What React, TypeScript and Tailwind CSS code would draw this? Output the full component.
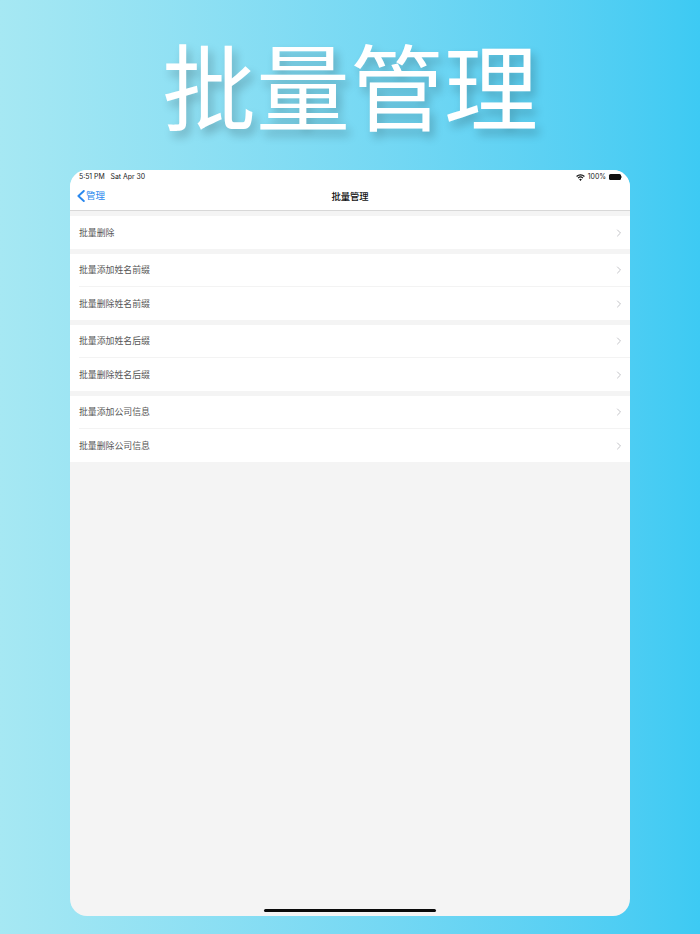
import { ChevronRight } from 'lucide-react';

const font = "font-['Inter','Noto_Sans_CJK_SC',sans-serif]";

const groups = [
  ['批量删除'],
  ['批量添加姓名前缀', '批量删除姓名前缀'],
  ['批量添加姓名后缀', '批量删除姓名后缀'],
  ['批量添加公司信息', '批量删除公司信息'],
];

const Row = ({ label, last }: { label: string; last: boolean }) => (
  <div className="h-[33px] pl-[9px] bg-white">
    <div className={`h-full flex items-center justify-between pr-[5px] ${last ? '' : 'border-b border-[#f3f3f3]'}`}>
      <span className="pt-[1px] text-[8.9px] leading-none text-[#555555]">{label}</span>
      <ChevronRight className="w-[12px] h-[12px] text-[#c4c4c8]" strokeWidth={2} />
    </div>
  </div>
);

export default function App() {
  return (
    <div className={`${font} w-[700px] h-[934px] overflow-hidden flex flex-col items-center bg-gradient-to-r from-[#a6e8f3] to-[#3dcaf3]`}>
      <h1 className="h-[170px] pt-[36px] text-[94px] leading-[108px] font-normal text-white [text-shadow:4px_6px_10px_rgba(0,0,0,0.22)]">
        批量管理
      </h1>
      <div className="w-[560px] h-[746px] rounded-[17px] overflow-hidden bg-[#f4f4f4] flex flex-col relative">
        <div className="h-[41px] bg-white border-b border-[#d8d8d8] flex flex-col">
          <div className="h-[13px] pt-[1px] pl-[9px] pr-[8px] flex items-center justify-between text-[6.9px] leading-none text-[#222222]">
            <span>5:51 PM&nbsp;&nbsp; Sat Apr 30</span>
            <div className="flex items-center gap-[3px]">
              <svg viewBox="0 0 16 12" className="w-[9px] h-[7px]" fill="#111111">
                <path d="M8 12 5.6 9.2a3.4 3.4 0 0 1 4.8 0zM4.4 7.9 3 6.3a7.2 7.2 0 0 1 10 0l-1.4 1.6a5.2 5.2 0 0 0-7.2 0zM1.8 5 .3 3.3a11.2 11.2 0 0 1 15.4 0L14.2 5a9 9 0 0 0-12.4 0z" />
              </svg>
              <span>100%</span>
              <div className="flex items-center">
                <div className="w-[12px] h-[6px] rounded-[1.5px] bg-[#111111]" />
                <div className="w-[1px] h-[2px] bg-[#999999]" />
              </div>
            </div>
          </div>
          <div className="relative flex-1 flex items-center justify-center">
            <div className="absolute left-[7px] top-[7px] flex items-center gap-[1px] text-[#2a88ee]">
              <svg viewBox="0 0 8 12" className="w-[8px] h-[12px]" fill="none" stroke="currentColor" strokeWidth="1.9" strokeLinecap="round" strokeLinejoin="round">
                <path d="M6.8 1 1.4 6l5.4 5" />
              </svg>
              <span className="text-[9.5px] leading-none">管理</span>
            </div>
            <span className="text-[9.3px] leading-none font-medium text-[#111111]">批量管理</span>
          </div>
        </div>
        <div className="flex flex-col gap-[5px] pt-[5px]">
          {groups.map((g) => (
            <div key={g[0]} className="flex flex-col">
              {g.map((label, i) => (
                <Row key={label} label={label} last={i === g.length - 1} />
              ))}
            </div>
          ))}
        </div>
        <div className="absolute left-[194px] bottom-[4px] w-[172px] h-[3px] rounded-full bg-[#0a0a0a]" />
      </div>
    </div>
  );
}
